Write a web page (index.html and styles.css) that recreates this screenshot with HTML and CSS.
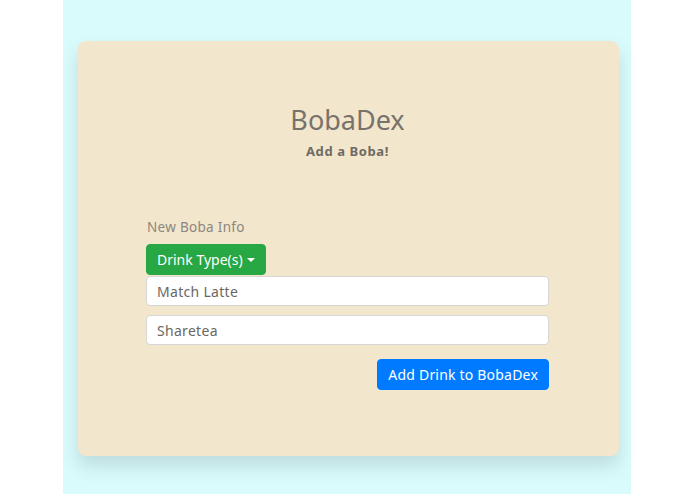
FILE: index.html
```html
<!DOCTYPE html>
<html>
<head>
<meta charset="utf-8">
<link rel="stylesheet" href="styles.css">
</head>
<body>
<div class="container">
  <div class="card">
    <h1 class="title">BobaDex</h1>
    <p class="subtitle">Add a Boba!</p>
    <form class="form">
      <label class="label">New Boba Info</label>
      <button type="button" class="btn btn-green">Drink Type(s)<span class="caret"></span></button>
      <input class="input" type="text" value="Match Latte">
      <input class="input input-2" type="text" value="Sharetea">
      <div class="actions">
        <button type="button" class="btn btn-blue">Add Drink to BobaDex</button>
      </div>
    </form>
  </div>
</div>
</body>
</html>
```

FILE: styles.css
```css
* { box-sizing: border-box; }
html, body { margin: 0; padding: 0; background: #ffffff; }
body {
  font-family: "Noto Sans", "DejaVu Sans", sans-serif;
  color: #726c66;
}
.container {
  width: 568px;
  margin-left: calc(50% - 284.5px);
  min-height: 494px;
  background: #dafbfb;
  padding: 41px 12px 0 15px;
}
.card {
  background: #f2e6cc;
  border-radius: 8px;
  height: 415px;
  box-shadow: 0 10px 18px rgba(60, 90, 90, 0.18);
  padding: 62px 70px 0 68px;
}
.title {
  margin: 0;
  text-align: center;
  font-weight: 400;
  font-size: 27px;
  line-height: 34px;
  color: #78726c;
}
.subtitle {
  margin: 6px 0 0;
  text-align: center;
  font-weight: 700;
  font-size: 13px;
  letter-spacing: 0.6px;
  line-height: 16px;
  color: #6f6a65;
}
.form {
  margin-top: 59px;
  display: flex;
  flex-direction: column;
  align-items: flex-start;
}
.label {
  font-size: 13.5px;
  letter-spacing: 0.3px;
  line-height: 18px;
  color: #8c8680;
  margin-left: 1px;
}
.btn {
  font-family: inherit;
  font-size: 14px;
  line-height: 21px;
  border: 1px solid transparent;
  border-radius: 4px;
  padding: 4px 10px;
  color: #ffffff;
  cursor: pointer;
}
.btn-green {
  margin-top: 8px;
  background: #28a745;
  border-color: #28a745;
  display: flex;
  align-items: center;
}
.caret {
  display: inline-block;
  margin-left: 4px;
  border-top: 4px solid #ffffff;
  border-left: 4px solid transparent;
  border-right: 4px solid transparent;
}
.btn-blue {
  background: #007bff;
  border-color: #007bff;
  padding: 4px 10px;
  letter-spacing: 0.2px;
}
.input {
  margin-top: 1px;
  width: 100%;
  height: 30px;
  border: 1px solid #d6d6d6;
  border-radius: 4px;
  background: #ffffff;
  font-family: inherit;
  font-size: 14px;
  letter-spacing: 0.3px;
  color: #6b6762;
  padding: 0 10px;
}
.input-2 { margin-top: 9px; }
.actions {
  width: 100%;
  display: flex;
  justify-content: flex-end;
  margin-top: 14px;
}
```
